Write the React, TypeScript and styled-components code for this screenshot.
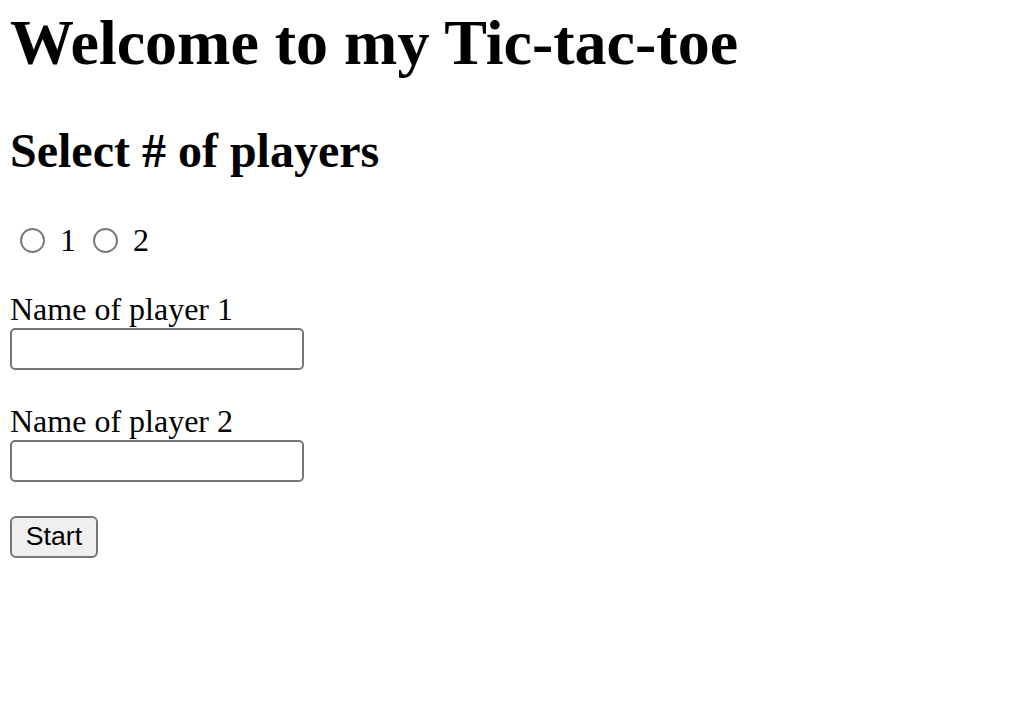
import React from "react";
import styled, { createGlobalStyle } from "styled-components";

const GlobalStyle = createGlobalStyle`
  html, body {
    margin: 0;
    padding: 0;
    background: #ffffff;
  }
  body {
    font-family: "Liberation Serif", "Times New Roman", serif;
    color: #000000;
  }
`;

const Page = styled.main`
  display: flex;
  flex-direction: column;
  align-items: flex-start;
  padding: 0 0 0 10px;
`;

const Title = styled.h1`
  margin: 6px 0 0;
  font-size: 64px;
  line-height: 74px;
  font-weight: 700;
`;

const Subtitle = styled.h2`
  margin: 42.5px 0 0;
  font-size: 48px;
  line-height: 56px;
  font-weight: 700;
`;

const ChoiceRow = styled.div`
  display: flex;
  align-items: center;
  gap: 7px;
  margin-top: 43.8px;
  height: 37px;
`;

const Option = styled.label`
  display: flex;
  align-items: center;
  font-size: 32px;
  line-height: 37px;
`;

const Radio = styled.input.attrs({ type: "radio" })`
  appearance: none;
  -webkit-appearance: none;
  box-sizing: border-box;
  width: 25px;
  height: 25px;
  margin: 0 15px 0 10px;
  border: 2px solid #7a7a7a;
  border-radius: 50%;
  background: #ffffff;
  flex: none;
`;

const Field = styled.div<{ $gap: number }>`
  display: flex;
  flex-direction: column;
  align-items: flex-start;
  margin-top: ${(p) => p.$gap}px;
`;

const FieldLabel = styled.label`
  font-size: 32px;
  line-height: 37px;
`;

const TextInput = styled.input.attrs({ type: "text" })`
  box-sizing: border-box;
  width: 294px;
  height: 42px;
  margin: 0;
  padding: 2px 4px;
  border: 2px solid #767676;
  border-radius: 5px;
  background: #ffffff;
  font-size: 26px;
`;

const StartButton = styled.button`
  box-sizing: border-box;
  margin-top: 34px;
  width: 88px;
  height: 42px;
  padding: 0 12px;
  border: 2px solid #767676;
  border-radius: 6px;
  background: #efefef;
  color: #000000;
  font-family: "Liberation Sans", Arial, sans-serif;
  font-size: 26.67px;
  line-height: 37px;
  text-align: center;
`;

export default function App() {
  return (
    <>
      <GlobalStyle />
      <Page>
        <Title>Welcome to my Tic-tac-toe</Title>
        <Subtitle>Select # of players</Subtitle>
        <ChoiceRow>
          <Option>
            <Radio name="players" value="1" />1
          </Option>
          <Option>
            <Radio name="players" value="2" />2
          </Option>
        </ChoiceRow>
        <Field $gap={31.4}>
          <FieldLabel htmlFor="p1">Name of player 1</FieldLabel>
          <TextInput id="p1" />
        </Field>
        <Field $gap={33.2}>
          <FieldLabel htmlFor="p2">Name of player 2</FieldLabel>
          <TextInput id="p2" />
        </Field>
        <StartButton>Start</StartButton>
      </Page>
    </>
  );
}
